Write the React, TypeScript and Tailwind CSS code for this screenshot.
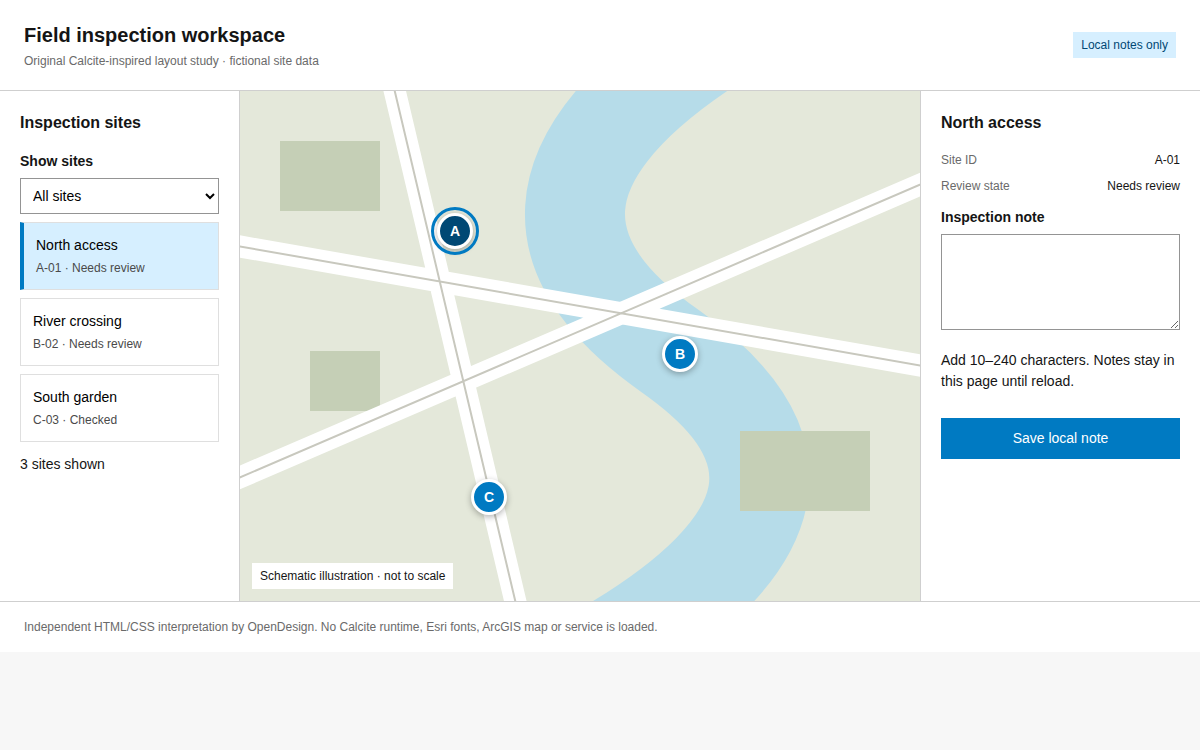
import { useState } from 'react'
import clsx from 'clsx'

type ReviewState = 'Needs review' | 'Checked'

interface Site {
  id: string
  pin: string
  name: string
  state: ReviewState
  x: number
  y: number
}

const MAP_WIDTH = 680
const MAP_HEIGHT = 510

// x / y are map units, see the viewBox in MapArt
const sites: Site[] = [
  { id: 'A-01', pin: 'A', name: 'North access', state: 'Needs review', x: 215, y: 140 },
  { id: 'B-02', pin: 'B', name: 'River crossing', state: 'Needs review', x: 440, y: 263 },
  { id: 'C-03', pin: 'C', name: 'South garden', state: 'Checked', x: 249, y: 406 },
]

const roads = 'M-20 152 L700 278 M-20 395 L700 85 M150 -20 L280 530'

export default function App() {
  const [filter, setFilter] = useState('all')
  const [selectedId, setSelectedId] = useState('A-01')

  const visible = sites.filter((site) => filter === 'all' || site.state === filter)
  const selected = sites.find((site) => site.id === selectedId) ?? sites[0]

  return (
    <div className="min-h-screen bg-[#f7f7f7] font-['Liberation_Sans',Arial,sans-serif] text-[14px] leading-normal text-[#151515]">
      <header className="flex items-center justify-between gap-4 border-b border-[#cfcfcf] bg-white px-6 py-5">
        <div>
          <h1 className="text-[20px] leading-normal font-bold">Field inspection workspace</h1>
          <p className="mt-0.5 text-[12px] leading-normal text-[#6a6a6a]">
            Original Calcite-inspired layout study · fictional site data
          </p>
        </div>
        <span className="bg-[#d6efff] px-2 py-1 text-[12px] leading-normal text-[#004874]">Local notes only</span>
      </header>

      <main className="grid bg-white md:grid-cols-[240px_minmax(0,1fr)_280px]">
        <aside className="border-[#cfcfcf] p-5 md:border-r">
          <h2 className="mb-4 text-[16px] leading-normal font-bold">Inspection sites</h2>
          <label htmlFor="site-filter" className="mb-1.5 block font-bold">
            Show sites
          </label>
          <select
            id="site-filter"
            value={filter}
            onChange={(e) => setFilter(e.target.value)}
            className="h-9 w-full border border-[#949494] bg-white px-2 text-black"
          >
            <option value="all">All sites</option>
            <option value="Needs review">Needs review</option>
            <option value="Checked">Checked</option>
          </select>

          <ul className="mt-2 grid gap-2">
            {visible.map((site) => (
              <li key={site.id}>
                <SiteCard site={site} active={site.id === selectedId} onSelect={setSelectedId} />
              </li>
            ))}
          </ul>
          <p className="mt-3" aria-live="polite">
            {visible.length} sites shown
          </p>
        </aside>

        <section aria-label="Site map" className="relative aspect-[4/3] overflow-hidden bg-[#e4e8da]">
          <MapArt />
          {visible.map((site) => (
            <MapPin key={site.id} site={site} active={site.id === selectedId} onSelect={setSelectedId} />
          ))}
          <p className="absolute bottom-3 left-3 bg-white px-2 py-1 text-[12px] leading-normal">
            Schematic illustration · not to scale
          </p>
        </section>

        <SiteDetail site={selected} />
      </main>

      <footer className="border-t border-[#cfcfcf] bg-white px-6 py-4 text-[12px] leading-normal text-[#6a6a6a]">
        Independent HTML/CSS interpretation by OpenDesign. No Calcite runtime, Esri fonts, ArcGIS map or service is
        loaded.
      </footer>
    </div>
  )
}

interface SiteItemProps {
  site: Site
  active: boolean
  onSelect: (id: string) => void
}

function SiteCard({ site, active, onSelect }: SiteItemProps) {
  return (
    <button
      type="button"
      aria-pressed={active}
      onClick={() => onSelect(site.id)}
      className={clsx(
        'block w-full cursor-pointer border border-[#dfdfdf] p-3 text-left text-black',
        active ? 'border-l-4 border-l-[#007ac2] bg-[#d6efff]' : 'bg-white',
      )}
    >
      <span className="block">{site.name}</span>
      <span className="mt-[3px] block text-[12px] leading-normal text-[#4a4a4a]">
        {site.id} · {site.state}
      </span>
    </button>
  )
}

function MapPin({ site, active, onSelect }: SiteItemProps) {
  return (
    <button
      type="button"
      aria-label={`${site.name}, ${site.state}`}
      onClick={() => onSelect(site.id)}
      style={{ left: `${(site.x / MAP_WIDTH) * 100}%`, top: `${(site.y / MAP_HEIGHT) * 100}%` }}
      className={clsx(
        'absolute grid size-9 -translate-1/2 cursor-pointer place-items-center rounded-full border-3 border-white font-bold text-white shadow-[0_2px_6px_rgba(0,0,0,0.3)]',
        active ? 'bg-[#004874] outline-3 outline-offset-3 outline-[#007ac2]' : 'bg-[#007ac2]',
      )}
    >
      {site.pin}
    </button>
  )
}

function MapArt() {
  return (
    <svg
      className="block h-full w-full"
      viewBox={`0 0 ${MAP_WIDTH} ${MAP_HEIGHT}`}
      preserveAspectRatio="xMidYMid slice"
      fill="none"
      aria-hidden="true"
    >
      {/* River */}
      <path d="M460 -42 C295 70 302 170 430 260 C558 350 562 450 353 568" stroke="#b6dce9" strokeWidth="100" />

      {/* Parks */}
      <path d="M40 50h100v70H40z M70 260h70v60H70z M500 340h130v80H500z" fill="#c5cfb6" />

      {/* Roads with centre lines */}
      <path d={roads} stroke="#fff" strokeWidth="22" />
      <path d={roads} stroke="#c8c8be" strokeWidth="2" />
    </svg>
  )
}

function SiteDetail({ site }: { site: Site }) {
  const [note, setNote] = useState('')
  const [message, setMessage] = useState('Add 10–240 characters. Notes stay in this page until reload.')

  const save = () => {
    const length = note.trim().length
    setMessage(length < 10 || length > 240 ? 'Enter between 10 and 240 characters.' : `Note saved for ${site.name}.`)
  }

  return (
    <aside className="border-[#cfcfcf] p-5 md:border-l">
      <h2 className="mb-4 text-[16px] leading-normal font-bold">{site.name}</h2>
      <dl className="mb-3 grid gap-2 text-[12px] leading-normal">
        <div className="flex justify-between">
          <dt className="text-[#6a6a6a]">Site ID</dt>
          <dd>{site.id}</dd>
        </div>
        <div className="flex justify-between">
          <dt className="text-[#6a6a6a]">Review state</dt>
          <dd>{site.state}</dd>
        </div>
      </dl>

      <label htmlFor="inspection-note" className="mb-1.5 block font-bold">
        Inspection note
      </label>
      <textarea
        id="inspection-note"
        maxLength={240}
        value={note}
        onChange={(e) => setNote(e.target.value)}
        className="block h-24 w-full resize-y border border-[#949494] bg-white p-2"
      />
      <p className="mt-5 mb-[26px]" aria-live="polite">
        {message}
      </p>
      <button type="button" onClick={save} className="w-full cursor-pointer bg-[#007ac2] px-4 py-2.5 text-white">
        Save local note
      </button>
    </aside>
  )
}
